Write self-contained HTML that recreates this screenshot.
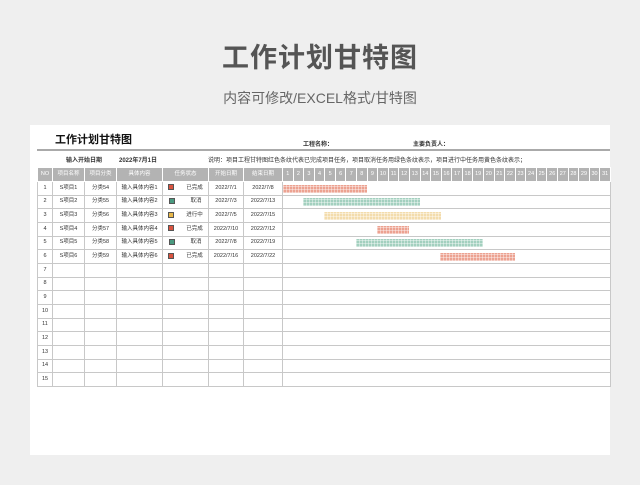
<!DOCTYPE html><html><head><meta charset="utf-8"><style>
*{margin:0;padding:0;box-sizing:border-box}
body{width:640px;height:485px;background:#efefef;position:relative;overflow:hidden;font-family:"Liberation Sans","Noto Sans CJK SC",sans-serif;color:#333}
.a{position:absolute;white-space:nowrap}
.card{position:absolute;left:30px;top:125px;width:580px;height:330px;background:#fff}
table{position:absolute;left:37px;top:167px;border-collapse:collapse;table-layout:fixed}
td{border:1px solid #c8c8c8;height:13.67px;line-height:11px;font-size:5.5px;text-align:center;vertical-align:middle;padding:0;white-space:nowrap;overflow:hidden}
tr.h td{background:#b3b3b3;color:#fff;border-color:#fff;height:14px}
.sq{display:inline-block;width:6px;height:6px;vertical-align:middle;margin-right:12px;border:1px solid #555}
.bar{position:absolute;height:8px;background-image:repeating-linear-gradient(90deg,rgba(255,255,255,.4) 0 1px,transparent 1px 3px),repeating-linear-gradient(0deg,rgba(255,255,255,.4) 0 1px,transparent 1px 3px)}
</style></head><body>
<div class="a" style="left:0;width:640px;text-align:center;top:36px;font-size:27px;font-weight:bold;color:#555;letter-spacing:1px">工作计划甘特图</div>
<div class="a" style="left:0;width:640px;text-align:center;top:88px;font-size:14px;color:#666">内容可修改/EXCEL格式/甘特图</div>
<div class="card"></div>
<div class="a" style="left:55px;top:131px;font-size:11px;font-weight:bold;color:#111">工作计划甘特图</div>
<div class="a" style="left:303px;top:139px;font-size:6px;font-weight:bold">工程名称：</div>
<div class="a" style="left:413px;top:139px;font-size:6px;font-weight:bold">主要负责人：</div>
<div class="a" style="left:37px;top:149px;width:573px;height:2px;background:#aaa"></div>
<div class="a" style="left:66px;top:155px;font-size:6px;font-weight:bold">输入开始日期</div>
<div class="a" style="left:119px;top:155px;font-size:6px;font-weight:bold">2022年7月1日</div>
<div class="a" style="left:208px;top:155px;font-size:6px">说明：项目工程甘特图红色条纹代表已完成项目任务，项目取消任务用绿色条纹表示，项目进行中任务用黄色条纹表示；</div>
<table id="t"><colgroup><col style="width:15px"><col style="width:32px"><col style="width:32px"><col style="width:46px"><col style="width:46px"><col style="width:35px"><col style="width:39px"><col span="31" style="width:10.58px"></colgroup>
<tr class="h"><td>NO</td><td>项目名称</td><td>项目分类</td><td>具体内容</td><td>任务状态</td><td>开始日期</td><td>结束日期</td><td>1</td><td>2</td><td>3</td><td>4</td><td>5</td><td>6</td><td>7</td><td>8</td><td>9</td><td>10</td><td>11</td><td>12</td><td>13</td><td>14</td><td>15</td><td>16</td><td>17</td><td>18</td><td>19</td><td>20</td><td>21</td><td>22</td><td>23</td><td>24</td><td>25</td><td>26</td><td>27</td><td>28</td><td>29</td><td>30</td><td>31</td></tr>
<tr><td>1</td><td>S项目1</td><td>分类54</td><td>输入具体内容1</td><td><span class="sq" style="background:#d9533f"></span>已完成</td><td>2022/7/1</td><td>2022/7/8</td><td colspan="31"></td></tr>
<tr><td>2</td><td>S项目2</td><td>分类55</td><td>输入具体内容2</td><td><span class="sq" style="background:#4a9a80"></span>&nbsp;&nbsp;取消</td><td>2022/7/3</td><td>2022/7/13</td><td colspan="31"></td></tr>
<tr><td>3</td><td>S项目3</td><td>分类56</td><td>输入具体内容3</td><td><span class="sq" style="background:#e8b84a"></span>进行中</td><td>2022/7/5</td><td>2022/7/15</td><td colspan="31"></td></tr>
<tr><td>4</td><td>S项目4</td><td>分类57</td><td>输入具体内容4</td><td><span class="sq" style="background:#d9533f"></span>已完成</td><td>2022/7/10</td><td>2022/7/12</td><td colspan="31"></td></tr>
<tr><td>5</td><td>S项目5</td><td>分类58</td><td>输入具体内容5</td><td><span class="sq" style="background:#4a9a80"></span>&nbsp;&nbsp;取消</td><td>2022/7/8</td><td>2022/7/19</td><td colspan="31"></td></tr>
<tr><td>6</td><td>S项目6</td><td>分类59</td><td>输入具体内容6</td><td><span class="sq" style="background:#d9533f"></span>已完成</td><td>2022/7/16</td><td>2022/7/22</td><td colspan="31"></td></tr>
<tr><td>7</td><td></td><td></td><td></td><td></td><td></td><td></td><td colspan="31"></td></tr>
<tr><td>8</td><td></td><td></td><td></td><td></td><td></td><td></td><td colspan="31"></td></tr>
<tr><td>9</td><td></td><td></td><td></td><td></td><td></td><td></td><td colspan="31"></td></tr>
<tr><td>10</td><td></td><td></td><td></td><td></td><td></td><td></td><td colspan="31"></td></tr>
<tr><td>11</td><td></td><td></td><td></td><td></td><td></td><td></td><td colspan="31"></td></tr>
<tr><td>12</td><td></td><td></td><td></td><td></td><td></td><td></td><td colspan="31"></td></tr>
<tr><td>13</td><td></td><td></td><td></td><td></td><td></td><td></td><td colspan="31"></td></tr>
<tr><td>14</td><td></td><td></td><td></td><td></td><td></td><td></td><td colspan="31"></td></tr>
<tr><td>15</td><td></td><td></td><td></td><td></td><td></td><td></td><td colspan="31"></td></tr>
</table>
<div class="bar" style="left:283px;top:184.5px;width:84px;background-color:#eca291"></div>
<div class="bar" style="left:303px;top:198px;width:117px;background-color:#a3d0bf"></div>
<div class="bar" style="left:324px;top:212px;width:117px;background-color:#f3dcac"></div>
<div class="bar" style="left:377px;top:225.5px;width:32px;background-color:#eca291"></div>
<div class="bar" style="left:356px;top:239px;width:127px;background-color:#a3d0bf"></div>
<div class="bar" style="left:440px;top:253px;width:75px;background-color:#eca291"></div>
</body></html>
